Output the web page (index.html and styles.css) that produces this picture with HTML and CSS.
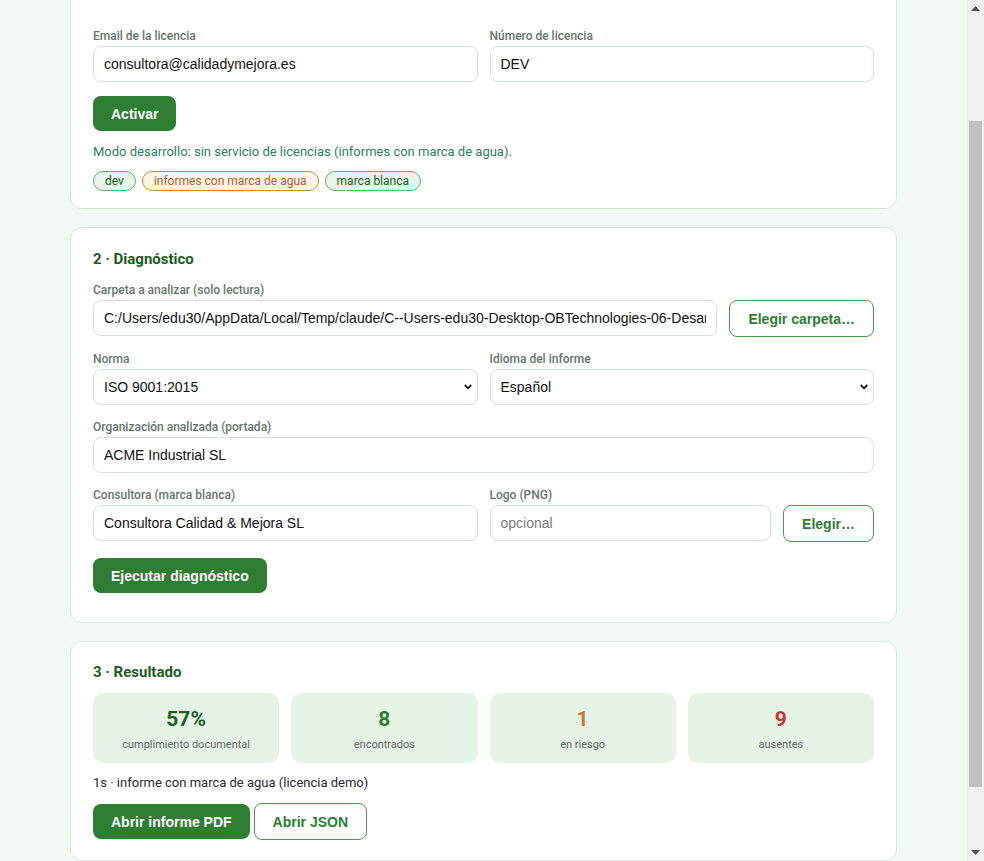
FILE: index.html
```html
<!DOCTYPE html>
<html lang="es">
<head>
<meta charset="utf-8">
<title>Diagnóstico documental ISO</title>
<link rel="stylesheet" href="styles.css">
</head>
<body>
<div class="window">
  <main class="viewport">
    <section class="card card-license">
      <div class="grid-2">
        <div class="field">
          <label class="label">Email de la licencia</label>
          <input class="input" type="text" value="consultora@calidadymejora.es">
        </div>
        <div class="field">
          <label class="label">Número de licencia</label>
          <input class="input" type="text" value="DEV">
        </div>
      </div>
      <div class="actions actions-license">
        <button class="btn btn-primary">Activar</button>
      </div>
      <p class="status-text">Modo desarrollo: sin servicio de licencias (informes con marca de agua).</p>
      <div class="chips">
        <span class="chip chip-green">dev</span>
        <span class="chip chip-orange">informes con marca de agua</span>
        <span class="chip chip-green">marca blanca</span>
      </div>
    </section>

    <section class="card card-diag">
      <h2 class="card-title">2 · Diagnóstico</h2>
      <div class="form">
        <div class="field">
          <label class="label">Carpeta a analizar (solo lectura)</label>
          <div class="with-button">
            <input class="input" type="text" value="C:/Users/edu30/AppData/Local/Temp/claude/C--Users-edu30-Desktop-OBTechnologies-06-Desarrollo" readonly>
            <button class="btn btn-outline">Elegir carpeta…</button>
          </div>
        </div>
        <div class="grid-2">
          <div class="field">
            <label class="label">Norma</label>
            <select class="input select">
              <option>ISO 9001:2015</option>
              <option>ISO 14001:2015</option>
              <option>ISO 45001:2018</option>
            </select>
          </div>
          <div class="field">
            <label class="label">Idioma del informe</label>
            <select class="input select">
              <option>Español</option>
              <option>English</option>
            </select>
          </div>
        </div>
        <div class="field">
          <label class="label">Organización analizada (portada)</label>
          <input class="input" type="text" value="ACME Industrial SL">
        </div>
        <div class="grid-2">
          <div class="field">
            <label class="label">Consultora (marca blanca)</label>
            <input class="input" type="text" value="Consultora Calidad &amp; Mejora SL">
          </div>
          <div class="field">
            <label class="label">Logo (PNG)</label>
            <div class="with-button">
              <input class="input" type="text" placeholder="opcional">
              <button class="btn btn-outline">Elegir…</button>
            </div>
          </div>
        </div>
      </div>
      <div class="actions actions-run">
        <button class="btn btn-primary">Ejecutar diagnóstico</button>
      </div>
      <div class="run-status"></div>
    </section>

    <section class="card card-result">
      <h2 class="card-title">3 · Resultado</h2>
      <div class="stats">
        <div class="stat">
          <div class="stat-value stat-dark">57%</div>
          <div class="stat-label">cumplimiento documental</div>
        </div>
        <div class="stat">
          <div class="stat-value stat-green">8</div>
          <div class="stat-label">encontrados</div>
        </div>
        <div class="stat">
          <div class="stat-value stat-orange">1</div>
          <div class="stat-label">en riesgo</div>
        </div>
        <div class="stat">
          <div class="stat-value stat-red">9</div>
          <div class="stat-label">ausentes</div>
        </div>
      </div>
      <p class="result-text">1s · informe con marca de agua (licencia demo)</p>
      <div class="actions actions-result">
        <button class="btn btn-primary">Abrir informe PDF</button>
        <button class="btn btn-outline">Abrir JSON</button>
      </div>
    </section>
  </main>

  <div class="scrollbar" aria-hidden="true">
    <div class="sb-arrow">
      <svg width="9" height="5" viewBox="0 0 9 5"><path d="M0 5 L4.5 0 L9 5 Z" fill="#505050"/></svg>
    </div>
    <div class="sb-track">
      <div class="sb-thumb"></div>
    </div>
    <div class="sb-arrow">
      <svg width="9" height="5" viewBox="0 0 9 5"><path d="M0 0 L9 0 L4.5 5 Z" fill="#505050"/></svg>
    </div>
  </div>
</div>
</body>
</html>
```

FILE: styles.css
```css
html, body {
  margin: 0;
  height: 100%;
  overflow: hidden;
}

body {
  background: #f2f8f4;
  font-family: Roboto, "Noto Sans", sans-serif;
  color: #1f2a24;
}

.window {
  display: flex;
  height: 861px;
}

.viewport {
  flex: 1;
  min-width: 0;
  height: 861px;
  overflow: hidden;
  display: flex;
  flex-direction: column;
  justify-content: flex-end;
  align-items: center;
  gap: 18px;
  box-sizing: border-box;
}

.card {
  box-sizing: border-box;
  flex-shrink: 0;
  width: 827px;
  background: #ffffff;
  border: 1px solid #d4e7d9;
  border-radius: 12px;
  padding: 20px 22px;
}

.card-license {
  padding-top: 60px;
  padding-bottom: 17px;
}

.card-diag {
  padding-top: 21px;
}

.card-title {
  margin: 0 0 12px;
  font-size: 15px;
  line-height: 20px;
  font-weight: 700;
  color: #1b5e20;
}

.card-result .card-title {
  margin-bottom: 11px;
}

.form {
  display: flex;
  flex-direction: column;
  gap: 13px;
}

.grid-2 {
  display: grid;
  grid-template-columns: 1fr 1fr;
  gap: 13px 12px;
}

.field {
  display: flex;
  flex-direction: column;
  gap: 1px;
  min-width: 0;
}

.label {
  padding-top: 1px;
  font-size: 12px;
  line-height: 17px;
  font-weight: 500;
  color: #66766c;
}

.input {
  box-sizing: border-box;
  height: 36px;
  width: 100%;
  min-width: 0;
  padding: 0 10px;
  border: 1px solid #d0e4d5;
  border-radius: 8px;
  background: #ffffff;
  font-family: "Liberation Sans", Arial, sans-serif;
  font-size: 14px;
  color: #111111;
  outline: none;
}

.input::placeholder {
  color: #7a7a7a;
}

.select {
  appearance: none;
  -webkit-appearance: none;
  padding-right: 24px;
  background-image: url("data:image/svg+xml,%3Csvg xmlns='http://www.w3.org/2000/svg' width='8' height='6' viewBox='0 0 8 6'%3E%3Cpath d='M0.8 1 L4 4.3 L7.2 1' fill='none' stroke='%23111' stroke-width='1.8'/%3E%3C/svg%3E");
  background-repeat: no-repeat;
  background-position: right 5px center;
  background-size: 8px 6px;
}

.with-button {
  display: grid;
  grid-template-columns: 1fr auto;
  gap: 12px;
  align-items: start;
}

.btn {
  box-sizing: border-box;
  font-family: "Liberation Sans", Arial, sans-serif;
  font-size: 14px;
  font-weight: 700;
  border-radius: 8px;
  padding: 0 18px;
  cursor: pointer;
}

.btn-primary {
  height: 35px;
  border: none;
  background: #2e7d32;
  color: #ffffff;
}

.btn-outline {
  height: 37px;
  border: 1px solid #43a047;
  background: #ffffff;
  color: #2e7d32;
}

.actions {
  display: flex;
  align-items: center;
  gap: 4px;
}

.actions-license {
  margin-top: 14px;
}

.actions-run {
  margin-top: 16px;
}

.actions-result {
  margin-top: 11px;
}

.run-status {
  height: 9px;
}

.status-text {
  margin: 12px 0 0;
  font-size: 13px;
  line-height: 18px;
  color: #2f7d63;
}

.chips {
  display: flex;
  gap: 6px;
  margin-top: 10px;
}

.chip {
  box-sizing: border-box;
  height: 20px;
  padding: 0 11px;
  border-radius: 10px;
  font-size: 12px;
  line-height: 18px;
  border: 1px solid;
}

.chip-green {
  background: #e6f4e9;
  border-color: #66b26b;
  color: #1b5e20;
}

.chip-orange {
  background: #fdf3e6;
  border-color: #c98a42;
  color: #a8662a;
}

.stats {
  display: grid;
  grid-template-columns: repeat(4, 1fr);
  gap: 12px;
}

.stat {
  background: #e6f4e8;
  border-radius: 10px;
  padding: 12px 8px 11px;
  text-align: center;
}

.stat-value {
  font-size: 21px;
  line-height: 28px;
  font-weight: 700;
}

.stat-label {
  margin-top: 5px;
  font-size: 11px;
  line-height: 14px;
  color: #5f6a64;
}

.stat-dark { color: #1b5e20; }
.stat-green { color: #2e7d32; }
.stat-orange { color: #c27a2c; }
.stat-red { color: #c0392b; }

.result-text {
  margin: 11px 0 0;
  font-size: 13px;
  line-height: 18px;
  color: #2a2a33;
}

.scrollbar {
  width: 17px;
  flex-shrink: 0;
  background: #f1f1f1;
  display: flex;
  flex-direction: column;
}

.sb-arrow {
  height: 17px;
  display: flex;
  align-items: center;
  justify-content: center;
}

.sb-track {
  flex: 1;
  display: flex;
  flex-direction: column;
  align-items: center;
}

.sb-thumb {
  width: 13px;
  height: 666px;
  margin-top: 104px;
  background: #c1c1c1;
}
```
